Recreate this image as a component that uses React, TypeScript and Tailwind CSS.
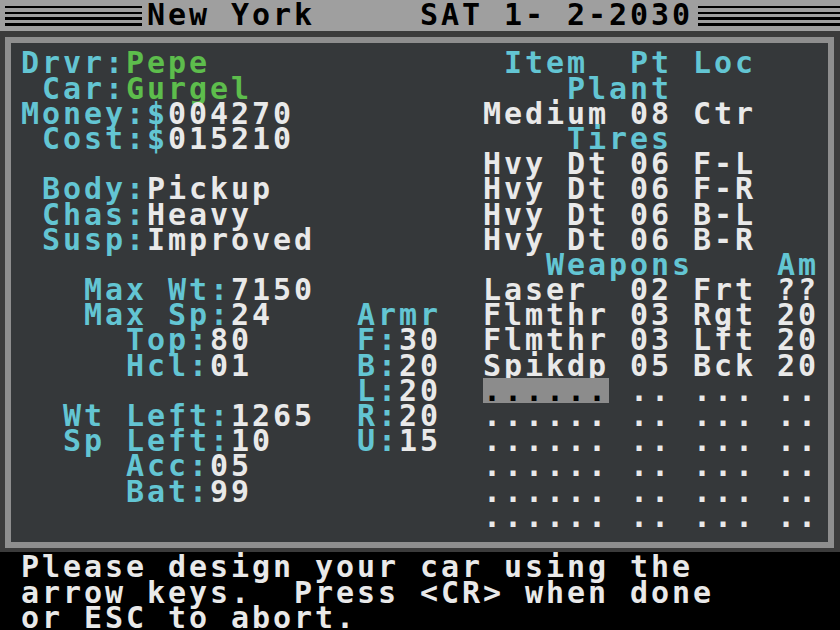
import React from "react";

type Seg = [string, string];

const CY = "text-[#63c5d3]";
const GR = "text-[#5dbd4c]";
const WH = "text-[#e9e9e9]";
const HL = "inline-block h-[25.2px] bg-[#8c8c8c] text-black align-top";

const frameRows: Seg[][] = [
  [["Drvr:", CY], ["Pepe", GR], ["              ", WH], ["Item  Pt Loc", CY]],
  [[" Car:", CY], ["Gurgel", GR], ["               ", WH], ["Plant", CY]],
  [["Money:$", CY], ["004270", WH], ["         ", WH], ["Medium 08 Ctr", WH]],
  [[" Cost:$", CY], ["015210", WH], ["             ", WH], ["Tires", CY]],
  [["                      ", WH], ["Hvy Dt 06 F-L", WH]],
  [[" Body:", CY], ["Pickup", WH], ["          ", WH], ["Hvy Dt 06 F-R", WH]],
  [[" Chas:", CY], ["Heavy", WH], ["           ", WH], ["Hvy Dt 06 B-L", WH]],
  [[" Susp:", CY], ["Improved", WH], ["        ", WH], ["Hvy Dt 06 B-R", WH]],
  [["                         ", WH], ["Weapons", CY], ["    ", WH], ["Am", CY]],
  [["   Max Wt:", CY], ["7150", WH], ["        ", WH], ["Laser  02 Frt ??", WH]],
  [["   Max Sp:", CY], ["24", WH], ["    ", WH], ["Armr", CY], ["  ", WH], ["Flmthr 03 Rgt 20", WH]],
  [["     Top:", CY], ["80", WH], ["     ", WH], ["F:", CY], ["30", WH], ["  ", WH], ["Flmthr 03 Lft 20", WH]],
  [["     Hcl:", CY], ["01", WH], ["     ", WH], ["B:", CY], ["20", WH], ["  ", WH], ["Spikdp 05 Bck 20", WH]],
  [["                ", WH], ["L:", CY], ["20", WH], ["  ", WH], ["......", HL], [" .. ... ..", WH]],
  [["  Wt Left:", CY], ["1265", WH], ["  ", WH], ["R:", CY], ["20", WH], ["  ", WH], ["...... .. ... ..", WH]],
  [["  Sp Left:", CY], ["10", WH], ["    ", WH], ["U:", CY], ["15", WH], ["  ", WH], ["...... .. ... ..", WH]],
  [["     Acc:", CY], ["05", WH], ["           ", WH], ["...... .. ... ..", WH]],
  [["     Bat:", CY], ["99", WH], ["           ", WH], ["...... .. ... ..", WH]],
  [["                      ", WH], ["...... .. ... ..", WH]],
];

const bottomRows = [
  "Please design your car using the",
  "arrow keys.  Press <CR> when done",
  "or ESC to abort.",
];

function Row({ segs }: { segs: Seg[] }) {
  return (
    <div className="h-[25.2px] leading-[25.2px] whitespace-pre">
      {segs.map(([t, c], i) => (
        <span key={i} className={c}>
          {t}
        </span>
      ))}
    </div>
  );
}

function Stripes() {
  return (
    <div className="flex flex-col gap-[3.35px] pt-[5.8px]">
      <div className="h-[2.5px] bg-black" />
      <div className="h-[2.5px] bg-black" />
      <div className="h-[2.5px] bg-black" />
      <div className="h-[2.5px] bg-black" />
    </div>
  );
}

export default function App() {
  return (
    <div className="w-[840px] h-[630px] overflow-hidden bg-[#3b3b3b] flex flex-col font-['DejaVu_Sans_Mono',monospace] font-bold text-[30px] tracking-[2.94px]">
      {/* title bar */}
      <div className="h-[31px] shrink-0 bg-[#9f9f9f] flex items-start">
        <div className="w-[147px] shrink-0 pl-[5px] pr-[5px]">
          <Stripes />
        </div>
        <div className="w-[546px] shrink-0 pt-[2px] h-[27px] leading-[25.2px] whitespace-pre text-black">
          New York     SAT 1- 2-2030
        </div>
        <div className="flex-1 pl-[5px]">
          <Stripes />
        </div>
      </div>

      {/* frame */}
      <div className="mt-[6px] ml-[5px] w-[829px] h-[511px] shrink-0 border-[6px] border-[#8e8e8e] bg-[#35383a] pt-[7.4px] pl-[10px]">
        {frameRows.map((r, i) => (
          <Row key={i} segs={r} />
        ))}
      </div>

      {/* message area */}
      <div className="mt-[4px] flex-1 bg-black pt-[2.4px] pl-[21px] text-[#e9e9e9]">
        {bottomRows.map((t, i) => (
          <div key={i} className="h-[25.2px] leading-[25.2px] whitespace-pre">
            {t}
          </div>
        ))}
      </div>
    </div>
  );
}
